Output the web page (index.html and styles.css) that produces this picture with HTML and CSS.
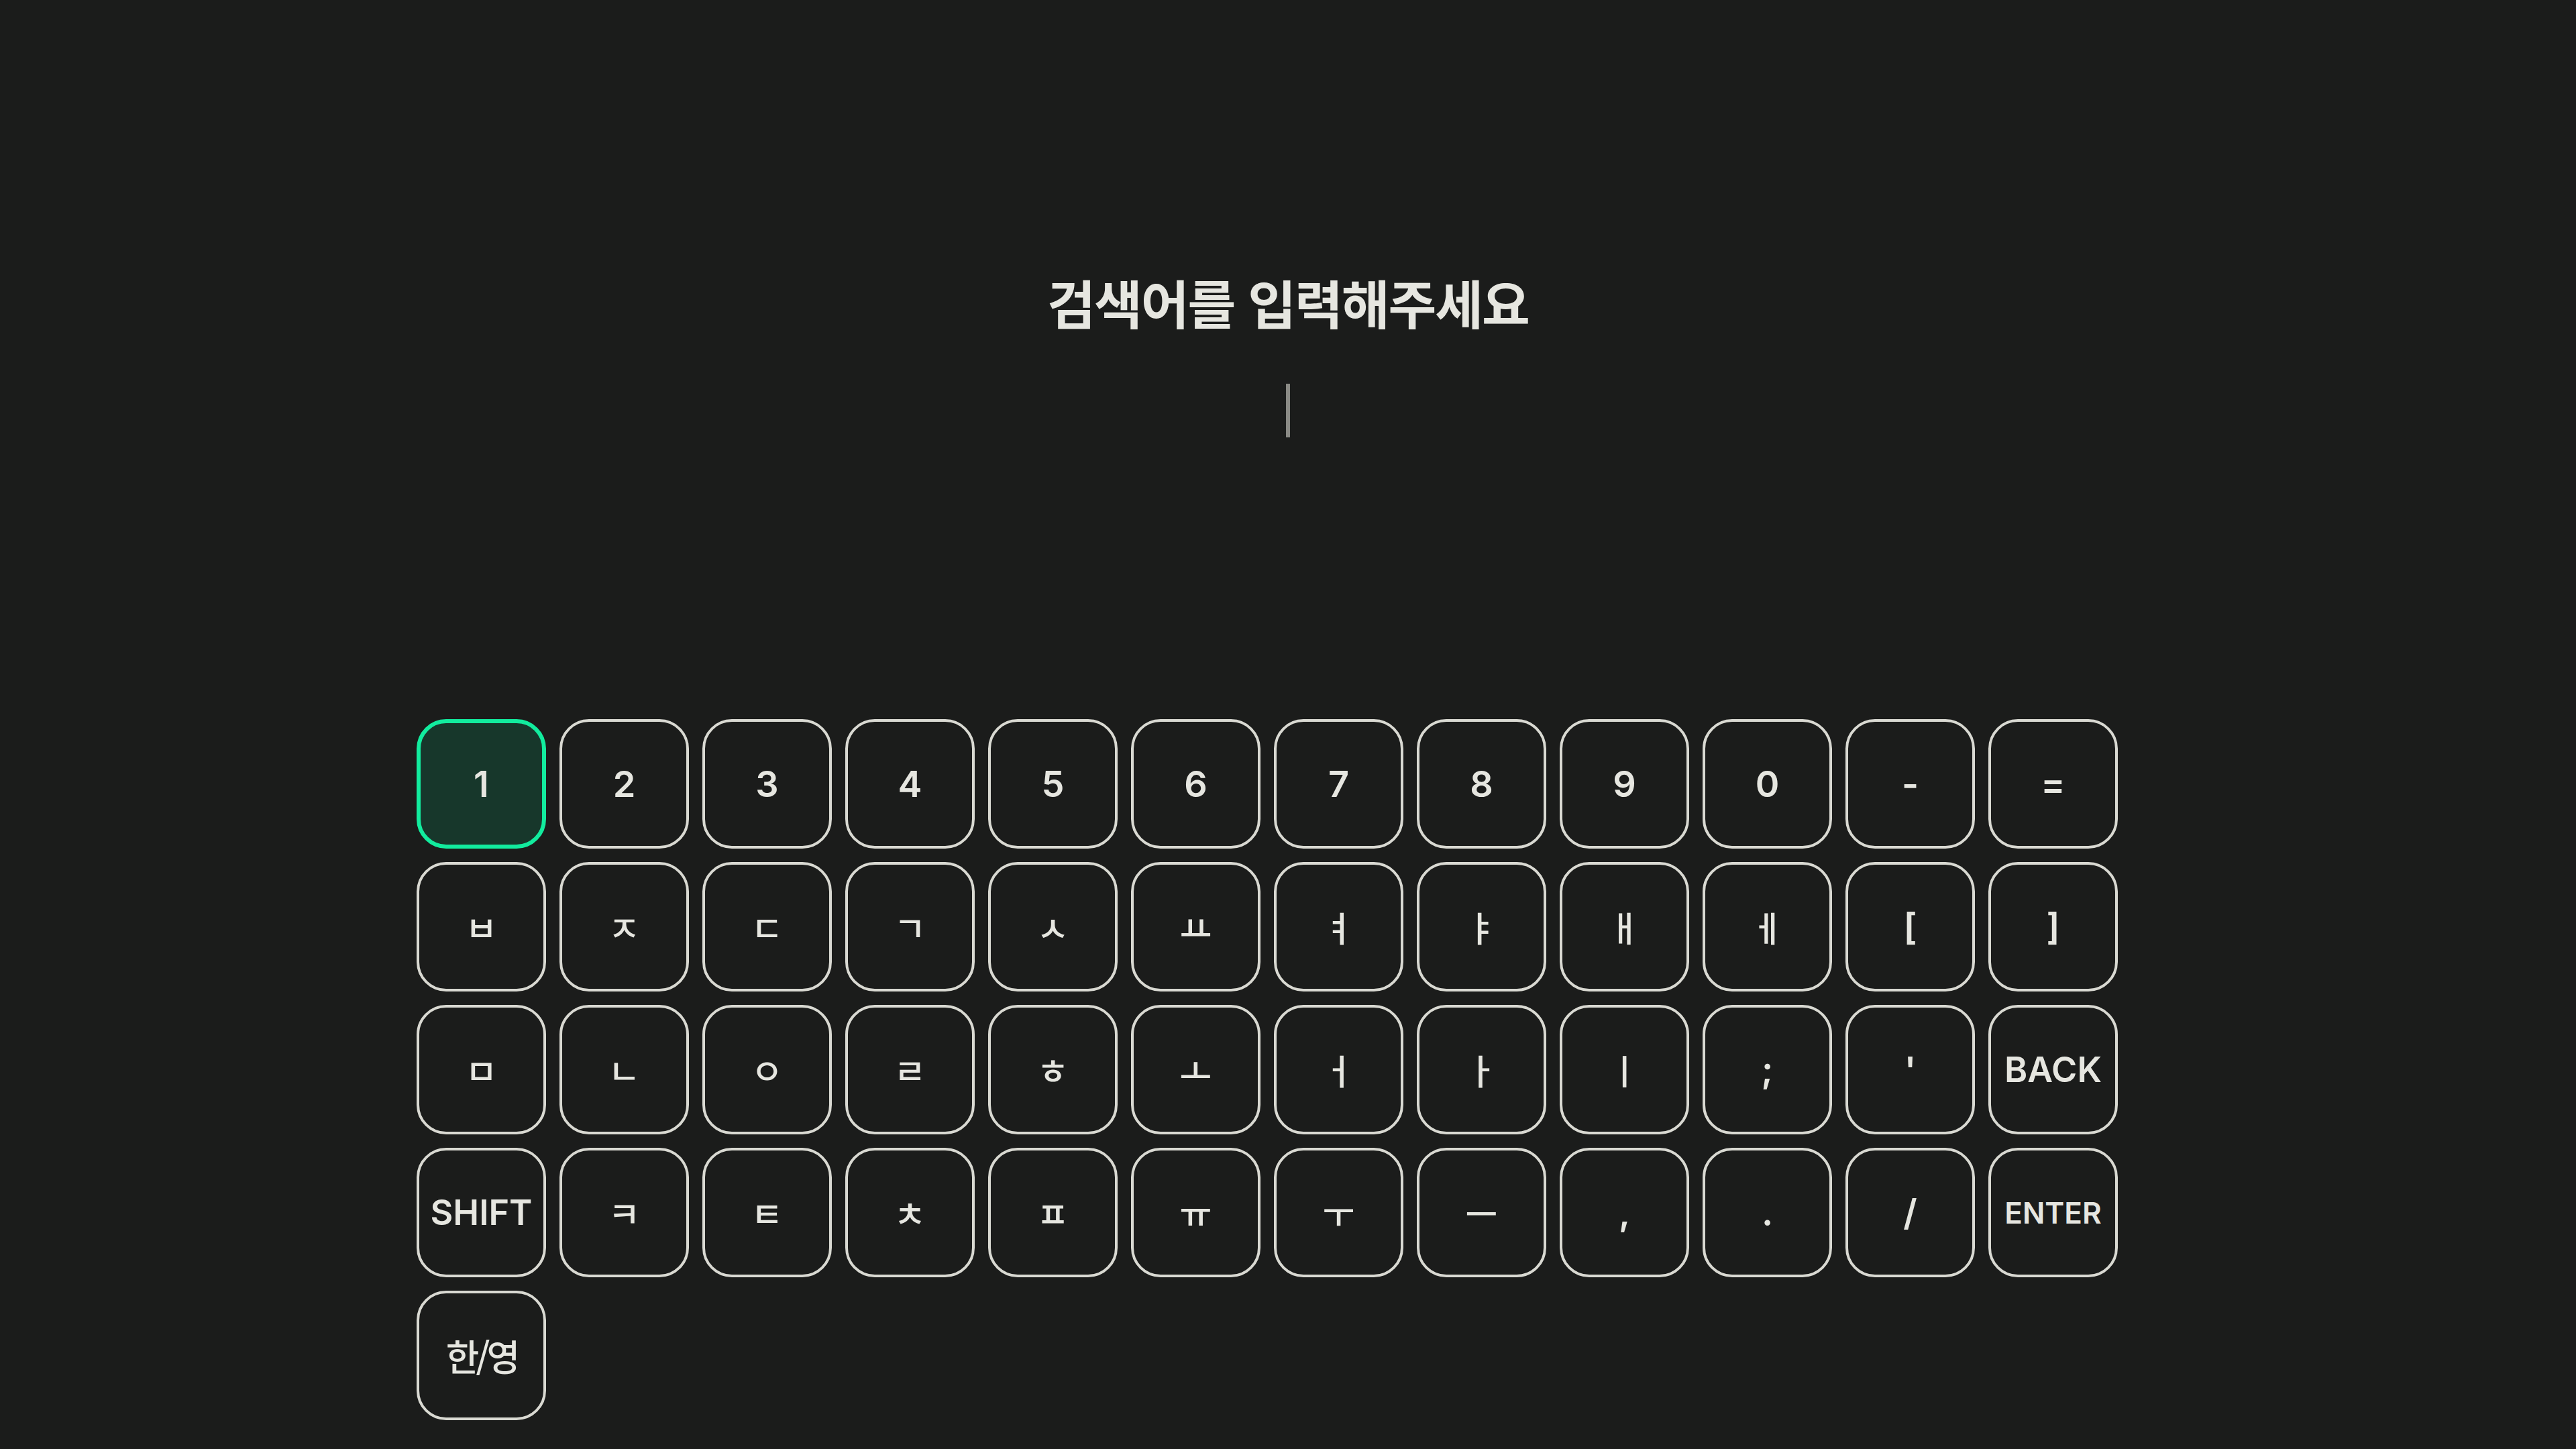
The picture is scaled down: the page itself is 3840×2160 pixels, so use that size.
FILE: index.html
```html
<!DOCTYPE html>
<html lang="ko">
<head>
<meta charset="utf-8">
<title>검색</title>
<link rel="stylesheet" href="styles.css">
</head>
<body>
<main class="screen">
  <section class="search">
    <h1 class="search-title">검색어를 입력해주세요</h1>
    <div class="search-input"><span class="caret"></span></div>
  </section>
  <section class="keyboard-wrap">
    <div class="keyboard">
      <button class="key key-focused">1</button>
      <button class="key">2</button>
      <button class="key">3</button>
      <button class="key">4</button>
      <button class="key">5</button>
      <button class="key">6</button>
      <button class="key">7</button>
      <button class="key">8</button>
      <button class="key">9</button>
      <button class="key">0</button>
      <button class="key">-</button>
      <button class="key">=</button>

      <button class="key key-jamo">ㅂ</button>
      <button class="key key-jamo">ㅈ</button>
      <button class="key key-jamo">ㄷ</button>
      <button class="key key-jamo">ㄱ</button>
      <button class="key key-jamo">ㅅ</button>
      <button class="key key-jamo">ㅛ</button>
      <button class="key key-jamo">ㅕ</button>
      <button class="key key-jamo">ㅑ</button>
      <button class="key key-jamo">ㅐ</button>
      <button class="key key-jamo">ㅔ</button>
      <button class="key">[</button>
      <button class="key">]</button>

      <button class="key key-jamo">ㅁ</button>
      <button class="key key-jamo">ㄴ</button>
      <button class="key key-jamo">ㅇ</button>
      <button class="key key-jamo">ㄹ</button>
      <button class="key key-jamo">ㅎ</button>
      <button class="key key-jamo">ㅗ</button>
      <button class="key key-jamo">ㅓ</button>
      <button class="key key-jamo">ㅏ</button>
      <button class="key key-jamo">ㅣ</button>
      <button class="key">;</button>
      <button class="key">'</button>
      <button class="key key-word">BACK</button>

      <button class="key key-word">SHIFT</button>
      <button class="key key-jamo">ㅋ</button>
      <button class="key key-jamo">ㅌ</button>
      <button class="key key-jamo">ㅊ</button>
      <button class="key key-jamo">ㅍ</button>
      <button class="key key-jamo">ㅠ</button>
      <button class="key key-jamo">ㅜ</button>
      <button class="key key-jamo">ㅡ</button>
      <button class="key">,</button>
      <button class="key">.</button>
      <button class="key">/</button>
      <button class="key key-word key-small">ENTER</button>

      <button class="key key-hangul">한/영</button>
    </div>
  </section>
</main>
</body>
</html>
```

FILE: styles.css
```css
html, body {
  margin: 0;
  padding: 0;
  background: #1b1c1b;
}

body {
  width: 3840px;
  height: 2160px;
  overflow: hidden;
  font-family: "Inter", "Noto Sans CJK KR", sans-serif;
  color: #e6e6e0;
}

.screen {
  display: flex;
  flex-direction: column;
  align-items: center;
}

.search {
  display: flex;
  flex-direction: column;
  align-items: center;
  padding-top: 411px;
}

.search-title {
  margin: 0;
  font-family: "Noto Sans CJK KR", sans-serif;
  font-size: 78px;
  line-height: 78px;
  font-weight: 700;
  letter-spacing: -2px;
  color: #e6e6e0;
}

.search-input {
  margin-top: 83px;
  height: 80px;
  display: flex;
  justify-content: center;
}

.caret {
  display: block;
  width: 6px;
  height: 80px;
  background: #8a8a85;
}

.keyboard-wrap {
  width: 2598px;
  margin-top: 420px;
}

.keyboard {
  display: grid;
  grid-template-columns: repeat(12, 193px);
  grid-auto-rows: 193px;
  gap: 20px;
}

.key {
  box-sizing: border-box;
  display: flex;
  align-items: center;
  justify-content: center;
  padding: 0;
  margin: 0;
  background: transparent;
  border: 4px solid #d9d9d2;
  border-radius: 44px;
  color: #e6e6e0;
  font-family: "Inter", "Noto Sans CJK KR", sans-serif;
  font-size: 54px;
  font-weight: 600;
  line-height: 1;
}

.key-focused {
  border: 6px solid #12ec9e;
  background: #17372b;
}

.key-jamo {
  font-family: "Noto Sans CJK KR", sans-serif;
  font-weight: 500;
  font-size: 52px;
}

.key-word {
  font-size: 52px;
}

.key-small {
  font-size: 44px;
}

.key-hangul {
  font-family: "Noto Sans CJK KR", sans-serif;
  font-weight: 500;
  font-size: 54px;
  letter-spacing: -5px;
}
```
